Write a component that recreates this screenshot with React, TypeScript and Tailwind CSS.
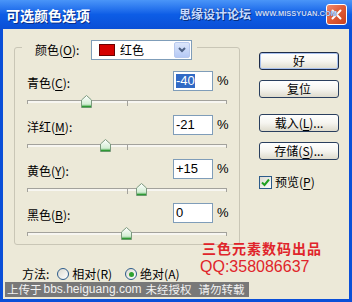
const channels = [
  { name: "青色", key: "C", value: -40, text: "-40", selected: true },
  { name: "洋红", key: "M", value: -21, text: "-21", selected: false },
  { name: "黄色", key: "Y", value: 15, text: "+15", selected: false },
  { name: "黑色", key: "B", value: 0, text: "0", selected: false },
];

function Label({ text, k, tail = ":" }: { text: string; k: string; tail?: string }) {
  return (
    <span className="whitespace-nowrap">
      {text}(<span className="underline underline-offset-2">{k}</span>){tail}
    </span>
  );
}

function Thumb() {
  return (
    <svg width="11" height="13" viewBox="0 0 11 13">
      <defs>
        <linearGradient id="th" x1="0" y1="0" x2="0" y2="1">
          <stop offset="0" stopColor="#ffffff" />
          <stop offset="0.7" stopColor="#d4eed5" />
          <stop offset="1" stopColor="#5fb562" />
        </linearGradient>
      </defs>
      <path d="M5.5 0.5 L10.5 5 V12.5 H0.5 V5 Z" fill="url(#th)" stroke="#7c9a7f" />
      <path d="M1 11.5 H10" stroke="#2f9a34" strokeWidth="1.5" />
    </svg>
  );
}

function Slider({ value }: { value: number }) {
  const left = ((value + 100) / 200) * 199 - 5.5;
  return (
    <div className="relative ml-[12px] w-[200px] h-[14px]">
      <div className="absolute left-0 right-0 top-[6px] h-[3px] border-t border-[#a3a29c] bg-[#f7f6f1] rounded-[1px]" />
      <div className="absolute left-0 top-[6px] w-px h-[4px] bg-[#a3a29c]" />
      <div className="absolute left-[100px] top-[7px] w-px h-[5px] bg-[#a3a29c]" />
      <div className="absolute right-0 top-[6px] w-px h-[4px] bg-[#a3a29c]" />
      <div className="absolute top-[1px]" style={{ left }}>
        <Thumb />
      </div>
    </div>
  );
}

function XpButton({ children, def = false }: { children: React.ReactNode; def?: boolean }) {
  return (
    <div
      className={
        "h-[18px] w-[80px] flex items-center justify-center rounded-[3px] border bg-gradient-to-b from-white via-[#f6f5f0] to-[#dedbcd] " +
        (def ? "border-[#1d2b48] shadow-[inset_0_0_0_1px_#a9c1ee]" : "border-[#2a3f5e]")
      }
    >
      {children}
    </div>
  );
}

function Radio({ on }: { on: boolean }) {
  return (
    <span className="w-[12px] h-[12px] rounded-full border border-[#2c5b8a] bg-gradient-to-br from-[#dcdad0] to-white flex items-center justify-center">
      {on && <span className="w-[5px] h-[5px] rounded-full bg-[#2fa130]" />}
    </span>
  );
}

export default function App() {
  return (
    <div className="relative w-[352px] h-[302px] overflow-hidden flex flex-col bg-[#0a4fd8] text-[12px] leading-[14px] text-black font-['Liberation_Sans','Noto_Sans_CJK_SC',sans-serif]">
      {/* title bar */}
      <div className="h-[29px] flex items-center pl-[6px] pr-[5px] bg-gradient-to-b from-[#4a95f8] via-[#0d5de6] to-[#0a4fd6]">
        <span className="font-bold text-[14px] text-white font-['Noto_Sans_CJK_SC',sans-serif] [text-shadow:1px_1px_0_#0a2f8a]">可选颜色选项</span>
        <div className="ml-auto w-[21px] h-[21px] rounded-[3px] border border-white bg-gradient-to-br from-[#f08a6c] via-[#de5a36] to-[#c8401d] flex items-center justify-center">
          <svg width="11" height="11" viewBox="0 0 11 11">
            <path d="M1.5 1.5 L9.5 9.5 M9.5 1.5 L1.5 9.5" stroke="white" strokeWidth="2" strokeLinecap="round" />
          </svg>
        </div>
      </div>

      {/* dialog body */}
      <div className="flex-1 mx-[3px] mb-[3px] bg-[#ece9d8] flex flex-col">
        <div className="flex">
          <div className="ml-[11px] mt-[18px] w-[226px] h-[198px] border border-[#c9c6b6] rounded-[3px] flex flex-col">
            <div className="-mt-[8px] ml-[7px] w-fit h-[20px] bg-[#ece9d8] flex items-center pl-[13px] pr-[5px]">
              <span className="w-[56px] font-['Noto_Sans_CJK_SC',sans-serif]">
                <Label text="颜色" k="O" />
              </span>
              <div className="w-[101px] h-[20px] border border-[#7f9db9] bg-white flex items-center">
                <span className="ml-[7px] w-[16px] h-[12px] bg-[#d40000] border border-[#6b0000]" />
                <span className="ml-[5px] font-['Noto_Sans_CJK_SC',sans-serif]">红色</span>
                <span className="ml-auto mr-px w-[16px] h-[16px] rounded-[2px] bg-gradient-to-b from-[#dce6fb] to-[#b5c9f5] border border-[#b8c9ee] flex items-center justify-center">
                  <svg width="8" height="6" viewBox="0 0 8 6">
                    <path d="M1 1 L4 4 L7 1" stroke="#4d6185" strokeWidth="2" fill="none" />
                  </svg>
                </span>
              </div>
            </div>

            <div className="mt-[11px] flex flex-col gap-[7px]">
              {channels.map((c) => (
                <div key={c.key} className="flex flex-col">
                  <div className="h-[20px] flex items-center pl-[12px]">
                    <span className="w-[146px] pt-[3px] font-['Noto_Sans_CJK_SC',sans-serif]">
                      <Label text={c.name} k={c.key} />
                    </span>
                    <div className="w-[40px] h-[20px] border border-[#7f9db9] bg-white flex items-center pl-[2px] text-[13px]">
                      <span className={c.selected ? "bg-[#316ac5] text-white" : ""}>{c.text}</span>
                    </div>
                    <span className="ml-[4px] text-[13px]">%</span>
                  </div>
                  <div className="mt-[3px]">
                    <Slider value={c.value} />
                  </div>
                </div>
              ))}
            </div>
          </div>

          <div className="ml-[19px] mt-[23px] flex flex-col font-['Noto_Sans_CJK_SC',sans-serif]">
            <XpButton def>好</XpButton>
            <div className="mt-[10px]">
              <XpButton>复位</XpButton>
            </div>
            <div className="mt-[16px]">
              <XpButton>
                <Label text="载入" k="L" tail="..." />
              </XpButton>
            </div>
            <div className="mt-[10px]">
              <XpButton>
                <Label text="存储" k="S" tail="..." />
              </XpButton>
            </div>
            <div className="mt-[15px] flex items-center">
              <span className="w-[13px] h-[13px] border border-[#2c5b8a] bg-gradient-to-br from-[#dcdad0] to-white flex items-center justify-center">
                <svg width="9" height="9" viewBox="0 0 9 9">
                  <path d="M1 4.5 L3.5 7 L8 1.5" stroke="#21a121" strokeWidth="2" fill="none" />
                </svg>
              </span>
              <span className="ml-[3px]">
                <Label text="预览" k="P" tail="" />
              </span>
            </div>
          </div>
        </div>

        <div className="mt-[23px] pl-[19px] flex items-center h-[12px] leading-[12px] font-['Noto_Sans_CJK_SC',sans-serif]">
          <span>方法:</span>
          <span className="ml-[8px]">
            <Radio on={false} />
          </span>
          <span className="ml-[3px]">相对(R)</span>
          <span className="ml-[13px]">
            <Radio on />
          </span>
          <span className="ml-[3px]">绝对(A)</span>
        </div>
      </div>

      {/* watermarks laid over the screenshot */}
      <div className="absolute left-[179px] top-[7px] flex items-center pointer-events-none">
        <span className="text-[12px] font-bold text-[#c7dbff] font-['Noto_Sans_CJK_SC',sans-serif] [text-shadow:0_0_1px_#07307f,1px_1px_0_#07307f]">思缘设计论坛</span>
        <span className="ml-[4px] text-[7.5px] font-bold text-[#c7dbff] [text-shadow:0_0_1px_#07307f]">WWW.MISSYUAN.COM</span>
      </div>
      <div className="absolute left-[202px] top-[241px] text-[14px] leading-[14px] tracking-[1px] font-bold text-[#e0242a] font-['Noto_Sans_CJK_SC',sans-serif]">
        三色元素数码出品
      </div>
      <div className="absolute left-[200px] top-[259px] text-[16px] leading-[16px] text-[#e0242a] font-['Liberation_Sans',sans-serif]">
        QQ:358086637
      </div>
      <div className="absolute left-[5px] top-[282px] w-[244px] h-[15px] bg-[#787878] text-[#f2f2f2] text-[11.5px] leading-[15px] flex items-center pl-[2px] whitespace-nowrap">
        <span className="font-['Noto_Sans_CJK_SC',sans-serif]">上传于</span>
        <span className="ml-[2px] text-[12px]">bbs.heiguang.com</span>
        <span className="ml-[4px] font-['Noto_Sans_CJK_SC',sans-serif]">未经授权</span>
        <span className="ml-[7px] font-['Noto_Sans_CJK_SC',sans-serif]">请勿转载</span>
      </div>
    </div>
  );
}
